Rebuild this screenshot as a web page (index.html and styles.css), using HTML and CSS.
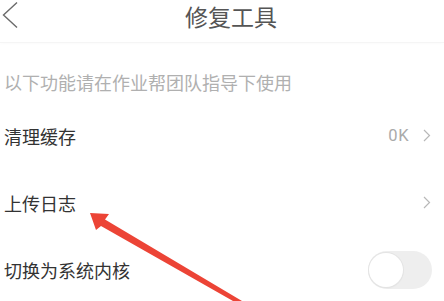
FILE: index.html
```html
<!DOCTYPE html>
<html lang="zh">
<head>
<meta charset="utf-8">
<title>修复工具</title>
<link rel="stylesheet" href="styles.css">
</head>
<body>
<div class="page">
  <header class="topbar">
    <svg class="back" width="20" height="31" viewBox="0 0 20 31">
      <polyline points="17,2.5 3.5,15 17,27.5" fill="none" stroke="#6a6a6a" stroke-width="1.4"/>
    </svg>
    <h1 class="title">修复工具</h1>
    <span class="spacer"></span>
  </header>
  <p class="hint">以下功能请在作业帮团队指导下使用</p>
  <div class="row">
    <span class="label">清理缓存</span>
    <span class="extra"><span class="value">0K</span><svg class="chev" width="8" height="13" viewBox="0 0 8 13"><polyline points="1,1 6.5,6.5 1,12" fill="none" stroke="#b8b8b8" stroke-width="1.2"/></svg></span>
  </div>
  <div class="row">
    <span class="label">上传日志</span>
    <span class="extra"><svg class="chev" width="8" height="13" viewBox="0 0 8 13"><polyline points="1,1 6.5,6.5 1,12" fill="none" stroke="#b8b8b8" stroke-width="1.2"/></svg></span>
  </div>
  <div class="row">
    <span class="label">切换为系统内核</span>
    <span class="toggle"><span class="knob"></span></span>
  </div>
  <svg class="annot" width="444" height="301" viewBox="0 0 444 301">
    <polygon points="90,213 109,214 105,219.5 242,301 233,301 101,226 96,230" fill="#ec4436"/>
  </svg>
</div>
</body>
</html>
```
FILE: styles.css
```css
html, body {
  margin: 0;
  padding: 0;
  background: #ffffff;
}
body {
  font-family: "Noto Sans CJK SC", "Noto Sans", sans-serif;
}
.page {
  position: relative;
  width: 444px;
  height: 301px;
  overflow: hidden;
}
.topbar {
  height: 42px;
  display: flex;
  align-items: flex-start;
  border-bottom: 1px solid #f5f5f5;
  box-shadow: 0 1px 3px rgba(0,0,0,0.02);
}
.back {
  flex: 0 0 auto;
  display: block;
}
.title {
  flex: 1;
  margin: 0;
  padding-left: 18px;
  text-align: center;
  font-size: 23px;
  font-weight: 400;
  line-height: 34px;
  margin-top: -1px;
  color: #555555;
}
.spacer {
  flex: 0 0 20px;
}
.hint {
  margin: 0;
  padding: 27px 0 0 4px;
  height: 32px;
  line-height: 25px;
  font-size: 18px;
  color: #b0b0b0;
}
.row {
  height: 67px;
  display: flex;
  align-items: center;
  justify-content: space-between;
  padding: 0 13px 0 4px;
}
.label {
  font-size: 18px;
  color: #333333;
  line-height: 26px;
}
.extra {
  display: flex;
  align-items: center;
  gap: 14px;
}
.value {
  font-family: "Roboto", "Noto Sans", sans-serif;
  font-size: 16.5px;
  color: #aaaaaa;
  letter-spacing: 0.5px;
}
.chev {
  display: block;
}
.toggle {
  position: relative;
  width: 64px;
  height: 38px;
  border-radius: 19px;
  background: #eeeeee;
  margin-right: -1px;
}
.knob {
  position: absolute;
  left: 1px;
  top: 2px;
  width: 34px;
  height: 34px;
  border-radius: 50%;
  background: #ffffff;
  box-shadow: 0 0 0 1px #e4e4e4, 0 1px 2px rgba(0,0,0,0.06);
}
.annot {
  position: absolute;
  left: 0;
  top: 0;
  pointer-events: none;
}
```
